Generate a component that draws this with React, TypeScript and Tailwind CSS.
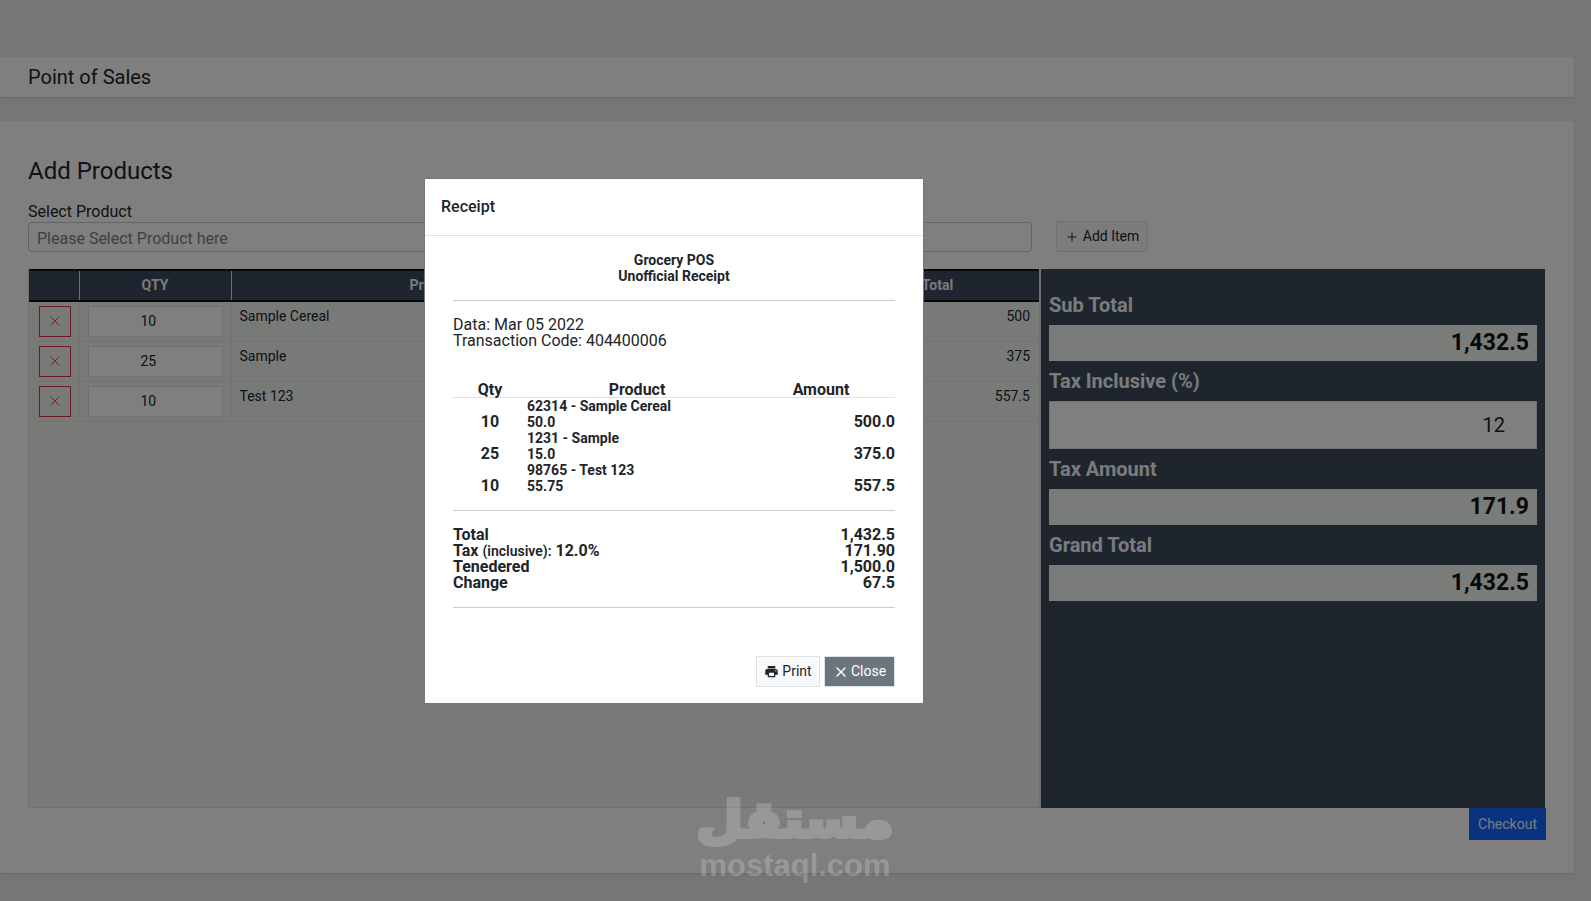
import {MdLocalPrintshop} from "react-icons/md";
import {Plus, X} from "lucide-react";

const rows = [
    {qty: 10, name: 'Sample Cereal', total: '500'},
    {qty: 25, name: 'Sample', total: '375'},
    {qty: 10, name: 'Test 123', total: '557.5'},
];

const receiptRows = [
    {qty: 10, code: '62314 - Sample Cereal', price: '50.0', amount: '500.0'},
    {qty: 25, code: '1231 - Sample', price: '15.0', amount: '375.0'},
    {qty: 10, code: '98765 - Test 123', price: '55.75', amount: '557.5'},
];

const Summary = ({label, value}: { label: string, value: string }) => (
    <div>
        <p className="text-[20px] leading-[24px] font-bold mb-2">{label}</p>
        <div className="h-9 bg-[#f4f8f4] text-[#111] text-[23px] leading-9 font-bold text-right pr-2 mb-2">{value}</div>
    </div>
);

const App = () => {
    return (
        <div className="relative h-screen overflow-hidden bg-[#ecedf0] text-[#212529] font-['Roboto',sans-serif]">
            <div className="h-[28px] border-b border-[#e4e6e8]"></div>

            <div className="mr-[17px] mt-[29px] h-[40px] bg-white rounded-[3px] shadow-sm pl-[28px] text-[20px] leading-[40px]">
                Point of Sales
            </div>

            <div className="mr-[17px] mt-[24px] h-[752px] bg-white rounded-[3px] shadow-sm px-[28px] pt-[34px]">
                <h3 className="text-[24px] leading-[32px] mb-[17px]">Add Products</h3>
                <div className="flex items-end h-[48px] w-[1120px]">
                    <div className="w-[1004px]">
                        <p className="text-[16px] leading-[18px] mb-[1px]">Select Product</p>
                        <div className="h-[30px] border border-[#c8c8cc] rounded-[4px] px-2 text-[16px] leading-[32px] text-[#7b838a]">
                            Please Select Product here
                        </div>
                    </div>
                    <button className="ml-[24px] w-[92px] h-[31px] border border-[#dee2e6] bg-[#f8f9fa] text-[14px] flex items-center justify-center gap-[4px]">
                        <Plus size={14} strokeWidth={1.7}/> Add Item
                    </button>
                </div>

                <div className="flex mt-[17px] h-[539px] w-[1517px]">
                    <div className="w-[1013px] bg-[#f0f4f0] border border-[#dee2e6] border-t-0 border-r-[2px]">
                        <table className="w-full table-fixed border-collapse text-[14px]">
                            <thead className="bg-[#3c4a5c] text-[#f4f6f9] border-y-[2px] border-[#111]">
                            <tr className="h-[31px]">
                                <th className="w-[50px] border-r border-[#dee2e6]"></th>
                                <th className="w-[152px] border-r border-[#dee2e6] font-bold">QTY</th>
                                <th className="w-[406px] font-bold">Product</th>
                                <th className="w-[199px]"></th>
                                <th className="font-bold">Total</th>
                            </tr>
                            </thead>
                            <tbody>
                            {rows.map((row, index) => (
                                <tr key={index} className="h-[40px] border-b border-[#e4e8e4]">
                                    <td className="border-r border-[#e4e8e4] pl-[10px]">
                                        <div className="w-[32px] h-[31px] border border-[#dc3545] flex items-center justify-center text-[#dc3545]">
                                            <X size={16} strokeWidth={1.3}/>
                                        </div>
                                    </td>
                                    <td className="border-r border-[#e4e8e4] pl-[8px]">
                                        <div className="w-[135px] h-[31px] border border-[#dee2e6] bg-white leading-[29px] pl-[52px]">
                                            {row.qty}
                                        </div>
                                    </td>
                                    <td className="align-top pt-[4px] pl-[8px]">{row.name}</td>
                                    <td></td>
                                    <td className="align-top pt-[4px] text-right pr-[9px]">{row.total}</td>
                                </tr>
                            ))}
                            </tbody>
                        </table>
                    </div>
                    <div className="w-[504px] bg-[#3c4a5a] text-[#f4f6f9] px-2 pt-6">
                        <Summary label="Sub Total" value="1,432.5"/>
                        <p className="text-[20px] leading-[24px] font-bold mb-2">Tax Inclusive (%)</p>
                        <div className="h-[48px] bg-white border border-[#dee2e6] text-[#212529] text-[20px] leading-[46px] text-right pr-[31px] mb-2">12</div>
                        <Summary label="Tax Amount" value="171.9"/>
                        <Summary label="Grand Total" value="1,432.5"/>
                    </div>
                </div>

                <div className="flex justify-end w-[1518px]">
                    <button className="w-[77px] h-[32px] bg-[#1467ff] text-[#f4f6f9] text-[14px]">Checkout</button>
                </div>
            </div>

            {/* modal backdrop */}
            <div className="fixed inset-0 bg-black/50"></div>

            <div className="absolute left-[424px] top-[178px] w-[500px] h-[526px] bg-white border border-[#777] text-[#212529]">
                <div className="h-[57px] border-b border-[#dee2e6] pl-4 text-[16px] font-medium leading-[56px]">Receipt</div>
                <div className="px-[28px] pt-[16px]">
                    <div className="text-center text-[14px] leading-[16px] font-bold">
                        <p>Grocery POS</p>
                        <p>Unofficial Receipt</p>
                    </div>
                    <hr className="mt-4 border-[#ccc]"/>
                    <div className="mt-[16px] text-[16px] leading-[16px]">
                        <p>Data: Mar 05 2022</p>
                        <p>Transaction Code: 404400006</p>
                    </div>
                    <table className="mt-[34px] w-full table-fixed border-collapse leading-[16px]">
                        <thead>
                        <tr className="border-b border-[#dee2e6] text-[16px] font-bold">
                            <th className="w-[74px] h-[14px] leading-[14px] font-bold">Qty</th>
                            <th className="w-[220px] h-[14px] leading-[14px] font-bold">Product</th>
                            <th className="h-[14px] leading-[14px] font-bold">Amount</th>
                        </tr>
                        </thead>
                        <tbody>
                        {receiptRows.map((row, index) => (
                            <tr key={index} className="font-bold">
                                <td className="text-center text-[16px] align-bottom">{row.qty}</td>
                                <td className="text-[14px]">
                                    <p>{row.code}</p>
                                    <p>{row.price}</p>
                                </td>
                                <td className="text-right text-[16px] align-bottom">{row.amount}</td>
                            </tr>
                        ))}
                        </tbody>
                    </table>
                    <hr className="mt-4 border-[#ccc]"/>
                    <div className="mt-[16px] flex justify-between text-[16px] leading-[16px] font-bold">
                        <div>
                            <p>Total</p>
                            <p>Tax <span className="text-[14px] font-semibold">(inclusive):</span> 12.0%</p>
                            <p>Tenedered</p>
                            <p>Change</p>
                        </div>
                        <div className="text-right">
                            <p>1,432.5</p>
                            <p>171.90</p>
                            <p>1,500.0</p>
                            <p>67.5</p>
                        </div>
                    </div>
                    <hr className="mt-[16px] border-[#ccc]"/>
                    <div className="mt-[48px] flex justify-end gap-[4px] text-[14px]">
                        <button className="w-[64px] h-[31px] border border-[#dee2e6] bg-[#f8f9fa] flex items-center justify-center gap-[3px]">
                            <MdLocalPrintshop size={15}/> Print
                        </button>
                        <button className="w-[71px] h-[31px] border border-[#dee2e6] bg-[#6c757d] text-white flex items-center justify-center gap-[2px]">
                            <X size={16} strokeWidth={2}/> Close
                        </button>
                    </div>
                </div>
            </div>

            {/* watermark */}
            <div className="absolute left-[699px] top-[792px] w-[192px] text-center text-white opacity-20 font-bold">
                <p className="text-[50px] leading-[56px] scale-x-[1.08] font-['DejaVu_Sans',sans-serif] [-webkit-text-stroke:4px_#fff]">مستقل</p>
                <p className="mt-[3px] text-[31px] leading-[30px] font-['Liberation_Sans',sans-serif]">mostaql.com</p>
            </div>
        </div>
    );
}

export default App
